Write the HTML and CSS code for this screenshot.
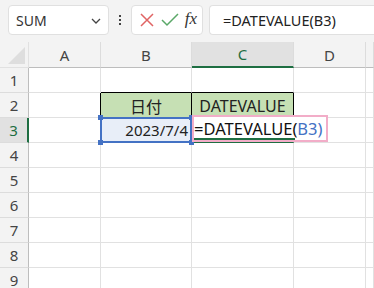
FILE: index.html
```html
<!DOCTYPE html>
<html lang="ja">
<head>
  <meta charset="UTF-8">
  <title>DATEVALUE</title>
  <link rel="stylesheet" href="styles.css">
</head>
<body>
  <div class="toolbar">
    <div class="name-box">
      <span>SUM</span>
      <svg class="chevron" width="12" height="8" viewBox="0 0 12 8"><path d="M2 2 L6 6 L10 2" fill="none" stroke="#444" stroke-width="1.3"/></svg>
    </div>
    <div class="kebab"><i></i><i></i><i></i></div>
    <div class="fx-buttons">
      <svg width="16" height="16" viewBox="0 0 16 16"><path d="M2 2 L14 14 M14 2 L2 14" stroke="#e06464" stroke-width="1.5"/></svg>
      <svg width="18" height="16" viewBox="0 0 18 16"><path d="M1 8 L6 13 L17 2" fill="none" stroke="#5aa868" stroke-width="1.5"/></svg>
      <span class="fx">fx</span>
    </div>
    <div class="formula">=DATEVALUE(B3)</div>
  </div>

  <div class="sheet">
    <div class="grid">
      <div class="corner"></div>
      <div class="ch">A</div>
      <div class="ch">B</div>
      <div class="ch sel">C</div>
      <div class="ch">D</div>
      <div class="ch"></div>

      <div class="rh">1</div>
      <div class="c"></div><div class="c bb"></div><div class="c bb"></div><div class="c"></div><div class="c"></div>

      <div class="rh">2</div>
      <div class="c br"></div>
      <div class="c hd">日付</div>
      <div class="c hd">DATEVALUE</div>
      <div class="c"></div><div class="c"></div>

      <div class="rh sel">3</div>
      <div class="c"></div>
      <div class="c num">2023/7/4</div>
      <div class="c active"></div>
      <div class="c"></div><div class="c"></div>

      <div class="rh">4</div>
      <div class="c"></div><div class="c"></div><div class="c"></div><div class="c"></div><div class="c"></div>
      <div class="rh">5</div>
      <div class="c"></div><div class="c"></div><div class="c"></div><div class="c"></div><div class="c"></div>
      <div class="rh">6</div>
      <div class="c"></div><div class="c"></div><div class="c"></div><div class="c"></div><div class="c"></div>
      <div class="rh">7</div>
      <div class="c"></div><div class="c"></div><div class="c"></div><div class="c"></div><div class="c"></div>
      <div class="rh">8</div>
      <div class="c"></div><div class="c"></div><div class="c"></div><div class="c"></div><div class="c"></div>
      <div class="rh">9</div>
      <div class="c"></div><div class="c"></div><div class="c"></div><div class="c"></div><div class="c"></div>
    </div>

    <!-- reference highlight on B3 -->
    <div class="ref-box">
      <i class="h tl"></i><i class="h tr"></i><i class="h bl"></i><i class="h br2"></i>
    </div>
    <!-- in-cell editor on C3 -->
    <div class="editor">=DATEVALUE(<span class="ref">B3)</span></div>
  </div>
</body>
</html>
```

FILE: styles.css
```css
body {
  margin: 0;
  width: 374px;
  height: 288px;
  overflow: hidden;
  background: #fff;
  font-family: "Noto Sans", "Noto Sans CJK JP", sans-serif;
  color: #222;
}
.toolbar {
  height: 42px;
  background: #f3f3f3;
  display: flex;
  align-items: center;
  padding-left: 8px;
  box-sizing: border-box;
  padding-bottom: 2px;
}
.name-box {
  width: 101px;
  height: 30px;
  box-sizing: border-box;
  background: #fff;
  border: 1px solid #e0e0e0;
  border-radius: 4px;
  display: flex;
  align-items: center;
  justify-content: space-between;
  padding: 0 6px 0 7px;
  font-size: 14px;
  color: #333;
}
.chevron {
  margin-top: 2px;
}
.kebab {
  width: 22px;
  display: flex;
  flex-direction: column;
  align-items: center;
  gap: 2px;
}
.kebab i {
  width: 2px;
  height: 2px;
  background: #444;
}
.fx-buttons {
  width: 72px;
  height: 30px;
  box-sizing: border-box;
  background: #fff;
  border: 1px solid #e0e0e0;
  border-radius: 4px;
  display: flex;
  align-items: center;
  justify-content: space-around;
  padding: 0 2px 0 4px;
}
.fx {
  font-family: "Liberation Serif", serif;
  font-style: italic;
  font-size: 17px;
  color: #333;
  margin-top: -2px;
}
.formula {
  flex: 1;
  margin-left: 6px;
  height: 30px;
  box-sizing: border-box;
  background: #fff;
  border: 1px solid #e0e0e0;
  border-right: none;
  border-radius: 4px 0 0 4px;
  padding-left: 13px;
  display: flex;
  align-items: center;
  font-size: 14.5px;
  color: #222;
}
.sheet {
  position: relative;
}
.grid {
  display: grid;
  grid-template-columns: 29px 72px 91px 102px 72px 8px;
  grid-template-rows: 26px repeat(9, 25px);
}
.grid > div {
  box-sizing: border-box;
  border-right: 1px solid #e1e1e1;
  border-bottom: 1px solid #e1e1e1;
  display: flex;
  align-items: center;
  justify-content: center;
}
.corner {
  background: #f3f3f3;
  position: relative;
}
.corner::after {
  content: "";
  position: absolute;
  right: 3px;
  bottom: 3px;
  border-left: 17px solid transparent;
  border-bottom: 17px solid #dedede;
}
.grid > .ch {
  background: #f3f3f3;
  border-bottom: 1px solid #bdbdbd;
  border-right-color: #dcdcdc;
  font-size: 15px;
  color: #444;
}
.grid > .ch.sel {
  background: #e1e1e1;
  color: #1e6e42;
  border-bottom: 2px solid #1e6e42;
}
.grid > .rh {
  background: #f3f3f3;
  border-right: 1px solid #bdbdbd;
  border-bottom-color: #dcdcdc;
  font-size: 15px;
  color: #444;
}
.grid > .rh.sel {
  background: #e1e1e1;
  color: #1e6e42;
  border-right: 2px solid #1e6e42;
}
.grid > .bb {
  border-bottom-color: #000;
}
.grid > .br {
  border-right-color: #000;
}
.grid > .hd {
  background: #c6e0b4;
  border-right-color: #000;
  border-bottom-color: #000;
  font-size: 16px;
  color: #222;
  padding-top: 1px;
}
.grid > .num {
  justify-content: flex-end;
  padding-right: 3px;
  font-size: 15px;
  background: #e8eef8;
}
.grid > .active {
  border-bottom: 2px solid #1e6e42;
}
.ref-box {
  position: absolute;
  left: 100px;
  top: 75px;
  width: 92px;
  height: 26px;
  box-sizing: border-box;
  border: 2px solid #4472c4;
}
.h {
  position: absolute;
  width: 5px;
  height: 5px;
  background: #4472c4;
}
.tl { left: -4px; top: -4px; }
.tr { right: -4px; top: -4px; }
.bl { left: -4px; bottom: -4px; }
.br2 { right: -4px; bottom: -4px; }
.editor {
  position: absolute;
  left: 192px;
  top: 73px;
  width: 136px;
  height: 27px;
  box-sizing: border-box;
  border: 2px solid #f2adc8;
  background: #fff;
  padding-left: 0;
  display: flex;
  align-items: center;
  font-size: 16.5px;
  color: #111;
}
.editor::after {
  content: "";
  position: absolute;
  left: 0;
  bottom: 0;
  width: 101px;
  height: 2px;
  background: #1e6e42;
}
.ref {
  color: #4472c4;
}
```
